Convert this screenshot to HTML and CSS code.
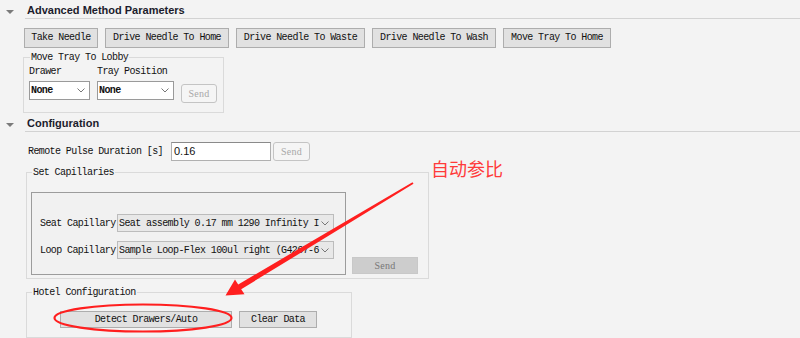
FILE: index.html
```html
<!DOCTYPE html>
<html>
<head>
<meta charset="utf-8">
<link rel="stylesheet" href="styles.css">
</head>
<body>
<div class="page">
  <div class="sec-head"><span class="tri-wrap"><span class="tri"></span></span><span class="sec-title">Advanced Method Parameters</span></div>
  <div class="sec-body">
    <div class="btn-row">
      <button class="btn w-take">Take Needle</button>
      <button class="btn w-home">Drive Needle To Home</button>
      <button class="btn w-waste">Drive Needle To Waste</button>
      <button class="btn w-wash">Drive Needle To Wash</button>
      <button class="btn w-tray">Move Tray To Home</button>
    </div>
    <fieldset class="group lobby">
      <legend>Move Tray To Lobby</legend>
      <div class="lobby-grid">
        <span class="lbl">Drawer</span>
        <span class="lbl">Tray Position</span>
        <span></span>
        <div class="combo white w-drawer"><span class="combo-text">None</span><svg class="chev" viewBox="0 0 8 5" width="8" height="5"><path d="M0.5 0.5 L4 4 L7.5 0.5" fill="none" stroke="#777" stroke-width="1"/></svg></div>
        <div class="combo white w-traypos"><span class="combo-text">None</span><svg class="chev" viewBox="0 0 8 5" width="8" height="5"><path d="M0.5 0.5 L4 4 L7.5 0.5" fill="none" stroke="#777" stroke-width="1"/></svg></div>
        <button class="btn-dis send-lobby">Send</button>
      </div>
    </fieldset>
  </div>

  <div class="sec-head"><span class="tri-wrap"><span class="tri"></span></span><span class="sec-title">Configuration</span></div>
  <div class="sec-body">
    <div class="pulse-row">
      <span class="lbl">Remote Pulse Duration [s]</span>
      <span class="input">0.16</span>
      <button class="btn-dis send-pulse">Send</button>
    </div>
    <fieldset class="group caps">
      <legend>Set Capillaries</legend>
      <div class="caps-row">
        <div class="inner">
          <div class="cap-line">
            <span class="cap-lbl">Seat Capillary</span>
            <div class="combo gray w-cap"><span class="combo-text">Seat assembly 0.17 mm 1290 Infinity I</span><svg class="chev" viewBox="0 0 8 5" width="8" height="5"><path d="M0.5 0.5 L4 4 L7.5 0.5" fill="none" stroke="#777" stroke-width="1"/></svg></div>
          </div>
          <div class="cap-line">
            <span class="cap-lbl">Loop Capillary</span>
            <div class="combo gray w-cap"><span class="combo-text">Sample Loop-Flex 100ul right (G4267-6</span><svg class="chev" viewBox="0 0 8 5" width="8" height="5"><path d="M0.5 0.5 L4 4 L7.5 0.5" fill="none" stroke="#777" stroke-width="1"/></svg></div>
          </div>
        </div>
        <button class="btn-flat">Send</button>
      </div>
    </fieldset>
    <fieldset class="group hotel">
      <legend>Hotel Configuration</legend>
      <div class="hotel-row">
        <button class="btn w-detect">Detect Drawers/Auto</button>
        <button class="btn w-clear">Clear Data</button>
      </div>
    </fieldset>
  </div>

  <span class="note">自动参比</span>
  <svg class="overlay" width="800" height="338" viewBox="0 0 800 338">
    <polygon points="413.5,183.8 241.2,289.2 244.5,294.2 225.5,295.5 235.0,279.5 238.2,284.4 412.5,182.2" fill="#ff1f1f"/>
    <ellipse cx="143" cy="318" rx="88.5" ry="13.5" fill="none" stroke="#ff1f1f" stroke-width="2.2"/>
  </svg>
</div>
</body>
</html>
```

FILE: styles.css
```css
html, body {
  margin: 0;
  padding: 0;
}
body {
  background: #f3f3f3;
}
.page {
  position: relative;
  width: 800px;
  height: 338px;
  overflow: hidden;
  font-family: "Liberation Mono", "DejaVu Sans Mono", monospace;
  font-size: 10px;
  letter-spacing: -0.6px;
  color: #111;
}
button {
  font-family: inherit;
  font-size: inherit;
  letter-spacing: inherit;
  margin: 0;
  padding: 0;
  box-sizing: border-box;
}
.sec-head {
  display: flex;
  height: 19px;
}
.tri-wrap {
  width: 25px;
  display: flex;
  justify-content: center;
  padding-top: 10px;
  box-sizing: border-box;
  padding-right: 5px;
}
.tri {
  width: 0;
  height: 0;
  border-left: 4px solid transparent;
  border-right: 4px solid transparent;
  border-top: 4px solid #7a7a7a;
}
.sec-title {
  flex: 1;
  box-sizing: border-box;
  padding-left: 2px;
  padding-top: 2px;
  border-bottom: 1px solid #d2d2d2;
  font-family: "Liberation Sans", Arial, sans-serif;
  font-weight: bold;
  font-size: 11px;
  letter-spacing: 0;
  line-height: 16px;
  color: #1c1c2c;
  height: 19px;
}
.sec-body {
  padding-left: 24px;
}
.btn-row {
  display: flex;
  gap: 7px;
  margin-top: 9px;
}
.btn {
  height: 20px;
  border: 1px solid #adadad;
  background: #e1e1e1;
  color: #111;
  line-height: 18px;
  text-align: center;
}
.w-take { width: 74px; }
.w-home { width: 124px; }
.w-waste { width: 129px; }
.w-wash { width: 124px; }
.w-tray { width: 108px; }

.group {
  margin: 0;
  border: 1px solid #dadada;
  box-sizing: border-box;
  min-width: 0;
}
.group legend {
  padding: 0 1px;
  margin-left: 1px;
  line-height: 11px;
  height: 11px;
  color: #111;
}
.lobby {
  width: 201px;
  margin: 4px 0 0 -1px;
  padding: 3px 5px 12px 5px;
}
.lobby-grid {
  display: grid;
  grid-template-columns: 61px 77px 37px;
  column-gap: 7px;
  row-gap: 3px;
  align-items: end;
}
.lbl {
  line-height: 12px;
  white-space: nowrap;
}
.combo {
  height: 19px;
  box-sizing: border-box;
  border: 1px solid #9a9a9a;
  display: flex;
  align-items: center;
  padding-left: 1px;
  padding-right: 4px;
  overflow: hidden;
}
.combo.white {
  background: #fff;
  font-weight: bold;
}
.combo.gray {
  background: #e8e8e8;
  border-color: #bcbcbc;
  height: 18px;
}
.combo-text {
  flex: 1;
  white-space: nowrap;
  overflow: hidden;
}
.chev {
  flex: none;
  margin-left: 1px;
}
.btn-dis {
  height: 19px;
  border: 1px solid #c4c4c4;
  border-radius: 3px;
  background: #f5f5f5;
  color: #a8a8a8;
  font-family: "Liberation Serif", serif;
  letter-spacing: 0.3px;
  font-size: 10px;
}
.send-lobby {
  width: 36px;
  margin-bottom: -3px;
}
.pulse-row {
  display: flex;
  align-items: center;
  margin-top: 10px;
  padding-left: 4px;
  height: 19px;
}
.pulse-row .lbl {
  width: 143px;
}
.input {
  width: 100px;
  height: 19px;
  box-sizing: border-box;
  border: 1px solid #b0b0b0;
  border-top-color: #8a8a8a;
  background: #fff;
  font-family: "Liberation Sans", sans-serif;
  letter-spacing: 0;
  font-size: 11px;
  line-height: 17px;
  padding-left: 2px;
}
.send-pulse {
  width: 37px;
  margin-left: 2px;
}
.caps {
  width: 403px;
  margin: 6px 0 0 2px;
  padding: 14px 9px 3px 4px;
}
.caps legend, .hotel legend {
  margin-left: 1px;
}
.caps-row {
  display: flex;
  align-items: flex-end;
  gap: 6px;
}
.inner {
  width: 315px;
  height: 83px;
  box-sizing: border-box;
  border: 1px solid #9c9c9c;
  background: #f1f1f1;
  padding: 21px 0 0 8px;
  display: flex;
  flex-direction: column;
  gap: 9px;
}
.cap-line {
  display: flex;
  align-items: center;
  height: 18px;
}
.cap-lbl {
  width: 77px;
  white-space: nowrap;
}
.w-cap {
  width: 217px;
}
.btn-flat {
  width: 66px;
  height: 17px;
  border: 1px solid #c8c8c8;
  background: #cdcdcd;
  color: #777;
  font-family: "Liberation Serif", serif;
  letter-spacing: 0.3px;
  margin-bottom: 1px;
}
.hotel {
  width: 326px;
  margin: 8px 0 0 2px;
  padding: 13px 5px 8px 4px;
  height: 51px;
}
.hotel-row {
  display: flex;
  gap: 7px;
  margin-left: 29px;
}
.hotel .btn {
  height: 17px;
  line-height: 15px;
}
.w-detect { width: 172px; }
.w-clear { width: 78px; }

.note {
  position: absolute;
  left: 431px;
  top: 157px;
  font-family: "Noto Sans CJK SC", sans-serif;
  font-size: 18px;
  letter-spacing: 0;
  color: #ff3a3a;
  line-height: 22px;
}
.overlay {
  position: absolute;
  left: 0;
  top: 0;
  pointer-events: none;
}
```
